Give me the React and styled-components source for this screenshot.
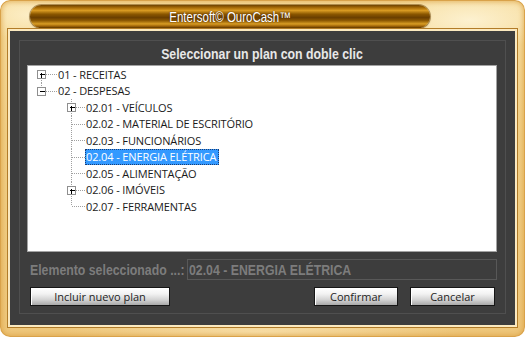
import React from "react";
import styled, { createGlobalStyle } from "styled-components";

const GlobalStyle = createGlobalStyle`
  html, body {
    margin: 0;
    padding: 0;
    background: #ffffff;
  }
  body {
    font-family: "Liberation Sans", Arial, sans-serif;
  }
`;

// no Arial Narrow here, so squeeze Liberation Sans to its width
const Narrow = styled.span`
  display: inline-block;
  white-space: nowrap;
  font-family: "Liberation Sans", Arial, sans-serif;
  font-weight: ${(p) => (p.$bold ? "bold" : "normal")};
  font-size: ${(p) => p.$size}px;
  transform: scaleX(0.82);
  transform-origin: ${(p) => p.$origin || "center"};
`;

const Frame = styled.div`
  width: 525px;
  height: 337px;
  box-sizing: border-box;
  padding: 0 8px 10px 8px;
  display: flex;
  flex-direction: column;
  border-radius: 10px;
  overflow: hidden;
  background:
    radial-gradient(ellipse 90px 30px at 470px 20px, rgba(255, 248, 225, 0.75), transparent),
    radial-gradient(ellipse 60px 25px at 30px 15px, rgba(255, 245, 215, 0.7), transparent),
    radial-gradient(ellipse 200px 14px at 260px 332px, rgba(255, 240, 200, 0.6), transparent),
    linear-gradient(180deg, #f7dea0 0%, #f1cf86 40%, #eec67a 100%);
  box-shadow: inset 0 0 0 1px #d9a24a, inset 0 0 5px 2px rgba(214, 150, 50, 0.6);
`;

const TitleBar = styled.div`
  height: 29px;
  box-sizing: border-box;
  padding: 5px 0 0 22px;
  display: flex;
  align-items: flex-start;
`;

const TitlePill = styled.div`
  width: 400px;
  height: 23px;
  box-sizing: border-box;
  border-radius: 12px;
  display: flex;
  align-items: center;
  justify-content: center;
  color: #ffffff;
  text-shadow: 0 0 2px rgba(60, 30, 0, 0.8);
  background: linear-gradient(
    180deg,
    #6e4200 0%,
    #a86c08 12%,
    #d99a22 24%,
    #8a5600 40%,
    #6a3e00 55%,
    #8e5a04 68%,
    #d89c24 82%,
    #a06408 92%,
    #5c3500 100%
  );
  box-shadow: 0 0 0 1px rgba(110, 70, 10, 0.5), 0 1px 2px rgba(120, 80, 10, 0.5);
`;

const Panel = styled.div`
  flex: 1;
  display: flex;
  box-sizing: border-box;
  background: #3d3d3d;
  border: 2px solid #fbe9bf;
  box-shadow: 0 0 0 1px #b27c28;
  padding: 9px 9px 11px 9px;
`;

const Group = styled.div`
  flex: 1;
  display: flex;
  flex-direction: column;
  border: 1px solid #4f4f4f;
  padding: 0 8px 6px 7px;
`;

const Heading = styled.div`
  height: 24px;
  display: flex;
  align-items: center;
  justify-content: center;
  color: #e8e8e8;
`;

const TreeBox = styled.div`
  height: 187px;
  box-sizing: border-box;
  background: #ffffff;
  border: 1px solid #a3a3a3;
  overflow: hidden;
`;

const Row = styled.div`
  height: 16.5px;
  display: flex;
  align-items: center;
`;

const Guide = styled.svg`
  flex-shrink: 0;
  display: block;
`;

const Label = styled.span`
  box-sizing: border-box;
  height: 16px;
  display: flex;
  align-items: center;
  padding: 0 2px 0 0;
  border: 1px dotted ${(p) => (p.$selected ? "#1c3d73" : "transparent")};
  background: ${(p) => (p.$selected ? "#3399ff" : "transparent")};
  color: ${(p) => (p.$selected ? "#ffffff" : "#1a1a1a")};
  font-family: "Open Sans", "Noto Sans", sans-serif;
  font-size: 11px;
  letter-spacing: -0.12px;
  white-space: nowrap;
`;

const StatusRow = styled.div`
  margin-top: 7px;
  height: 21px;
  display: flex;
  align-items: center;
  justify-content: space-between;
  padding-left: 3px;
  color: #7c7c7c;
`;

const StatusLabel = styled.div`
  width: 156px;
  overflow: visible;
`;

const StatusField = styled.div`
  width: 310px;
  height: 21px;
  box-sizing: border-box;
  border: 1px solid #585858;
  display: flex;
  align-items: center;
  padding-left: 1px;
  overflow: hidden;
`;

const ButtonRow = styled.div`
  margin-top: 7px;
  display: flex;
  align-items: center;
  padding: 0 2px 0 3px;
  gap: 12px;
`;

const Spacer = styled.div`
  flex: 1;
`;

const Button = styled.button`
  width: ${(p) => p.$width}px;
  height: 19px;
  box-sizing: border-box;
  padding: 0;
  border: 1px solid #161616;
  background: linear-gradient(180deg, #ffffff 0%, #f2f2f2 35%, #d2d2d2 70%, #a9a9a9 100%);
  box-shadow: inset 1px 1px 0 #ffffff;
  color: #1e1e1e;
  font-family: "Open Sans", "Noto Sans", sans-serif;
  font-size: 11px;
  cursor: pointer;
`;

const nodes = [
  { label: "01 - RECEITAS", level: 0, toggle: "plus", last: false },
  { label: "02 - DESPESAS", level: 0, toggle: "minus", last: true },
  { label: "02.01 - VEÍCULOS", level: 1, toggle: "plus", last: false },
  { label: "02.02 - MATERIAL DE ESCRITÓRIO", level: 1, last: false },
  { label: "02.03 - FUNCIONÁRIOS", level: 1, last: false },
  { label: "02.04 - ENERGIA ELÉTRICA", level: 1, last: false, selected: true },
  { label: "02.05 - ALIMENTAÇÃO", level: 1, last: false },
  { label: "02.06 - IMÓVEIS", level: 1, toggle: "plus", last: false },
  { label: "02.07 - FERRAMENTAS", level: 1, last: true },
];

const LINE = "#a0a0a0";

// connector lines + expander box for one row
function TreeGuide({ node, first }) {
  const width = 29 + 28 * node.level;
  const h = 16.5;
  const cy = 8;
  const cx = 13 + 30 * node.level;
  const lines = [];

  if (!first) {
    lines.push(<line key="up" x1={cx + 0.5} y1={0} x2={cx + 0.5} y2={cy} />);
  }
  if (!node.last) {
    lines.push(<line key="down" x1={cx + 0.5} y1={cy} x2={cx + 0.5} y2={h} />);
  }
  lines.push(<line key="across" x1={cx + 1} y1={cy + 0.5} x2={width} y2={cy + 0.5} />);

  return (
    <Guide width={width} height={h} viewBox={`0 0 ${width} ${h}`}>
      <g stroke={LINE} strokeWidth="1" strokeDasharray="1 1" shapeRendering="crispEdges">
        {lines}
      </g>
      {node.toggle && (
        <g shapeRendering="crispEdges">
          <rect x={cx - 3.5} y={cy - 3.5} width={8} height={8} fill="#ffffff" stroke="#8f8f8f" />
          <line x1={cx - 1.5} y1={cy + 0.5} x2={cx + 3.5} y2={cy + 0.5} stroke="#000" />
          {node.toggle === "plus" && (
            <line x1={cx + 0.5} y1={cy - 1.5} x2={cx + 0.5} y2={cy + 3.5} stroke="#000" />
          )}
        </g>
      )}
    </Guide>
  );
}

export default function App() {
  return (
    <>
      <GlobalStyle />
      <Frame>
        <TitleBar>
          <TitlePill>
            <Narrow $size={14}>Entersoft© OuroCash™</Narrow>
          </TitlePill>
        </TitleBar>
        <Panel>
          <Group>
            <Heading>
              <Narrow $size={15} $bold>Seleccionar un plan con doble clic</Narrow>
            </Heading>
            <TreeBox>
              {nodes.map((n, i) => (
                <Row key={n.label}>
                  <TreeGuide node={n} first={i === 0} />
                  <Label $selected={n.selected}>{n.label}</Label>
                </Row>
              ))}
            </TreeBox>
            <StatusRow>
              <StatusLabel>
                <Narrow $size={15} $bold $origin="left">Elemento seleccionado ...:</Narrow>
              </StatusLabel>
              <StatusField>
                <Narrow $size={15} $bold $origin="left">02.04 - ENERGIA ELÉTRICA</Narrow>
              </StatusField>
            </StatusRow>
            <ButtonRow>
              <Button $width={140}>Incluir nuevo plan</Button>
              <Spacer />
              <Button $width={84}>Confirmar</Button>
              <Button $width={85}>Cancelar</Button>
            </ButtonRow>
          </Group>
        </Panel>
      </Frame>
    </>
  );
}
